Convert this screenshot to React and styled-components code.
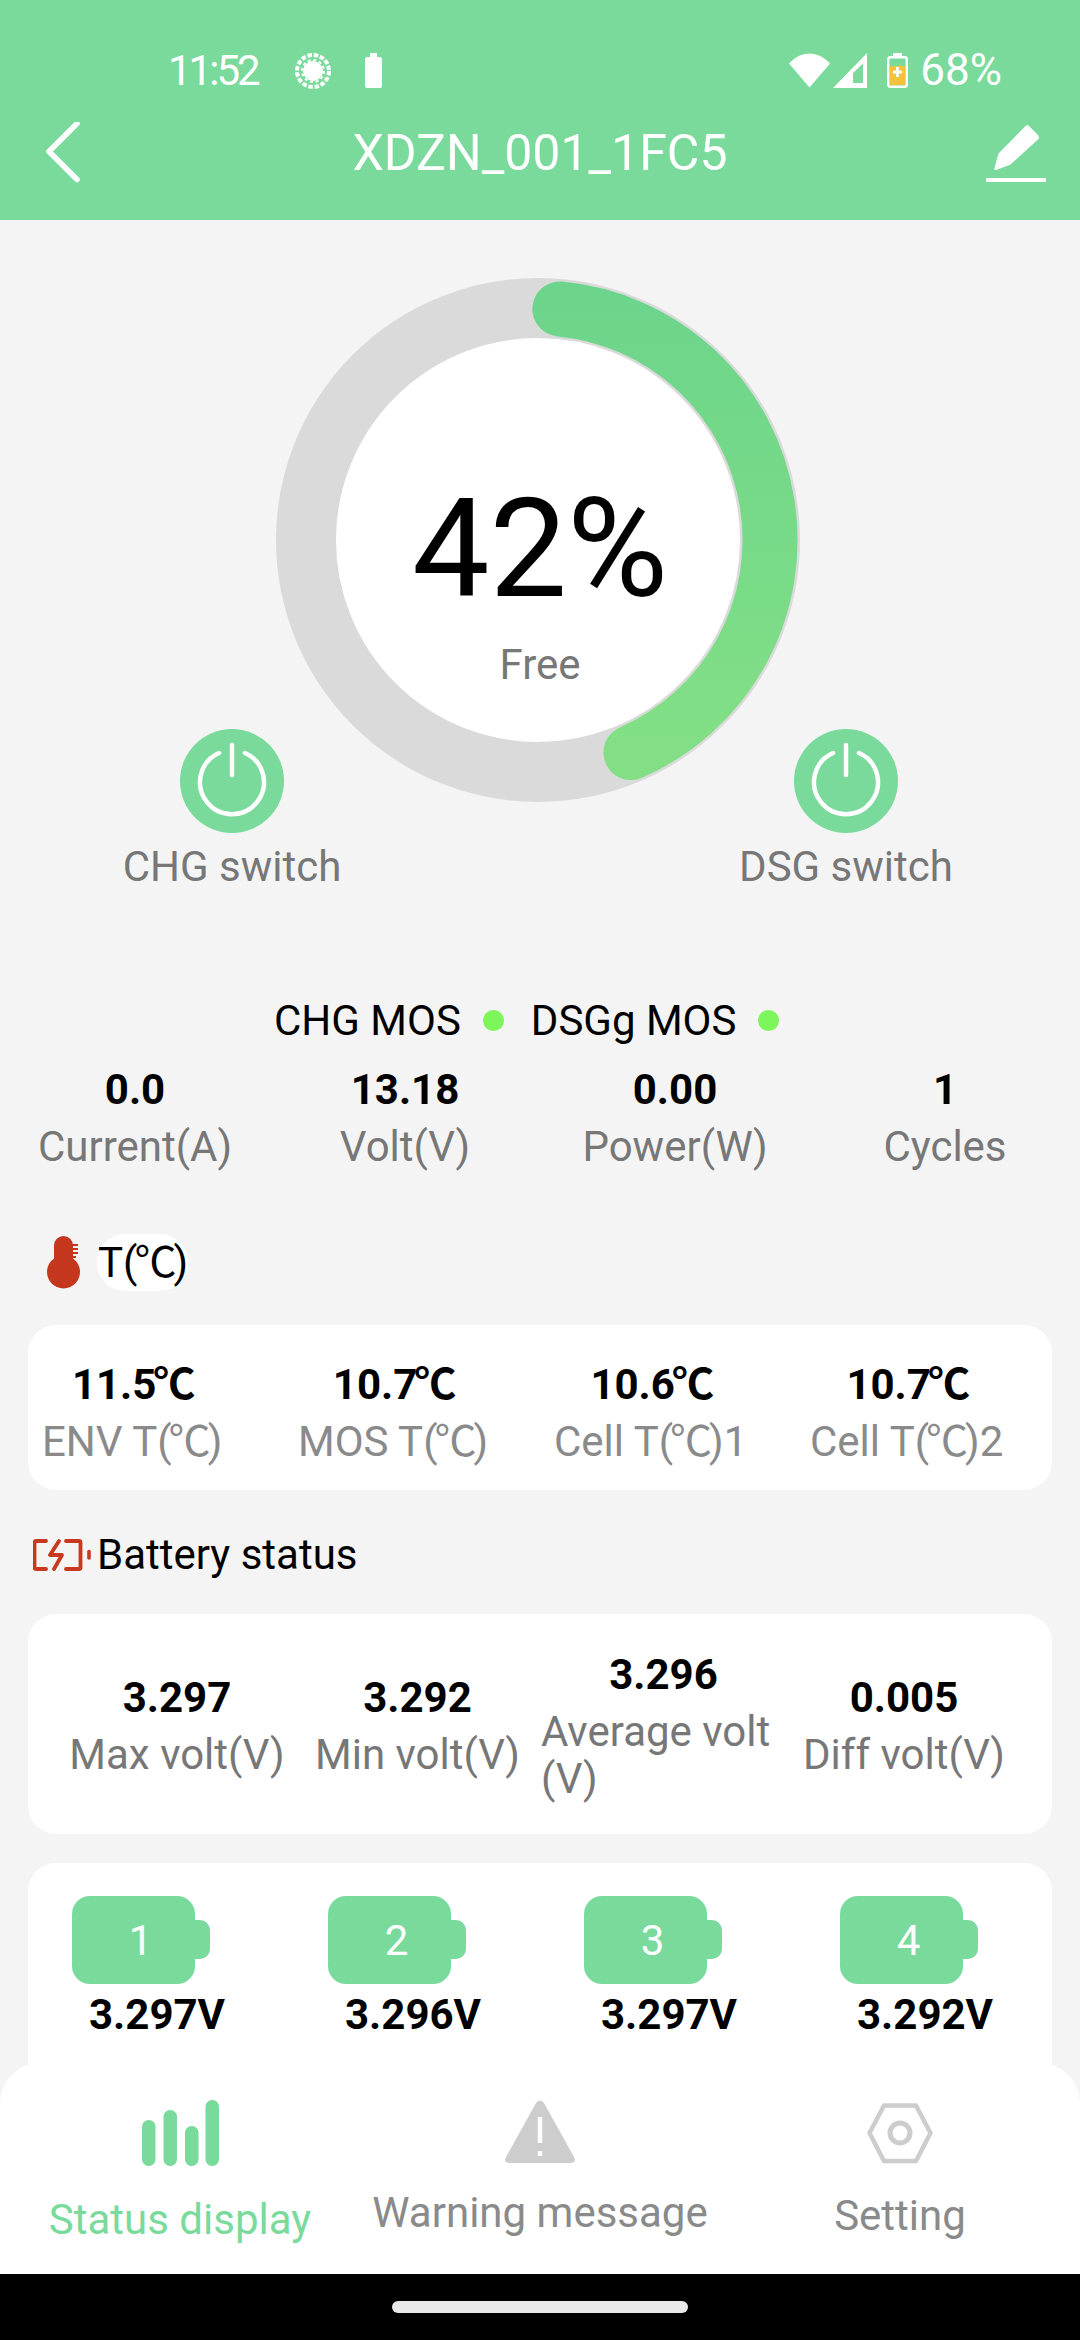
import React from "react";
import styled, { createGlobalStyle } from "styled-components";

const GREEN = "#79da9c";

const GlobalStyle = createGlobalStyle`
  html, body {
    margin: 0;
    padding: 0;
    background: #f4f4f4;
  }
  * {
    box-sizing: border-box;
  }
`;

const Page = styled.div`
  position: relative;
  width: 1080px;
  height: 2340px;
  overflow: hidden;
  background: #f4f4f4;
  font-family: Roboto, "Noto Sans CJK SC", sans-serif;
  font-size: 42px;
  line-height: 47px;
  color: #000;
`;

const Header = styled.header`
  height: 220px;
  background: ${GREEN};
  color: #fff;
  padding-top: 47px;
`;

const StatusBar = styled.div`
  display: flex;
  align-items: center;
  height: 47px;
  padding: 0 78px 0 168px;
`;

const Clock = styled.span`
  width: 126px;
  letter-spacing: -3px;
`;

const StatusIcons = styled.div`
  display: flex;
  align-items: center;
  gap: ${(p) => p.$gap}px;
  margin-left: ${(p) => (p.$right ? "auto" : "0")};
`;

const BatterySlot = styled.span`
  display: flex;
  margin-left: 17px;
`;

const Percent = styled.span`
  font-size: 44px;
  margin-left: 9px;
`;

const TitleBar = styled.div`
  display: grid;
  grid-template-columns: 1fr auto 1fr;
  align-items: center;
  height: 62px;
  margin-top: 28px;
  padding: 0 34px;

  & > svg:last-child {
    justify-self: end;
  }
`;

const Title = styled.h1`
  margin: 0;
  font-size: 50px;
  font-weight: 400;
`;

const RingBox = styled.div`
  position: relative;
  width: 524px;
  height: 524px;
  margin: 58px 0 0 276px;
  padding-left: 4px;
  display: flex;
  flex-direction: column;
  align-items: center;
`;

const RingArt = styled.svg`
  position: absolute;
  inset: 0;
`;

const BigValue = styled.div`
  position: relative;
  margin-top: 191px;
  font-size: 138px;
  line-height: 160px;
`;

const FreeLabel = styled.div`
  position: relative;
  margin-top: 12px;
  color: #777;
`;

const SwitchRow = styled.div`
  position: relative;
  display: flex;
  justify-content: space-between;
  margin-top: -73px;
  padding: 0 114px 0 112px;
`;

const SwitchItem = styled.div`
  width: 240px;
  display: flex;
  flex-direction: column;
  align-items: center;
  gap: 10px;
  color: #777;
`;

const MosRow = styled.div`
  display: flex;
  gap: 27px;
  margin-top: 107px;
  padding-left: 274px;
`;

const MosItem = styled.div`
  display: flex;
  align-items: center;
  gap: 22px;
`;

const Dot = styled.span`
  width: 21px;
  height: 21px;
  border-radius: 50%;
  background: #7cf65a;
`;

const StatsRow = styled.div`
  display: grid;
  grid-template-columns: repeat(4, 270px);
  margin-top: 22px;
`;

const Stat = styled.div`
  display: flex;
  flex-direction: column;
  align-items: center;
  text-align: ${(p) => (p.$start ? "left" : "center")};
`;

const Value = styled.b`
  display: block;
  font-weight: 700;
  align-self: center;
`;

const Label = styled.span`
  display: block;
  margin-top: 10px;
  white-space: ${(p) => (p.$wrap ? "normal" : "nowrap")};
  color: ${(p) => (p.$light ? "#8a8a8a" : "#777")};
`;

/* the degree sign sits tighter than the CJK font's full-width cell */
const Deg = styled.span`
  margin: 0 -3px;
`;

const SectionHead = styled.div`
  display: flex;
  align-items: center;
  margin: ${(p) => p.$top}px 0 0 ${(p) => p.$left}px;
  gap: ${(p) => p.$gap}px;
`;

const Pill = styled.span`
  display: flex;
  align-items: center;
  width: 91px;
  height: 57px;
  padding-left: 1px;
  border-radius: 28px;
  background: #fff;
  white-space: nowrap;
`;

const Card = styled.section`
  width: 1024px;
  margin: 0 0 0 28px;
  background: #fff;
  border-radius: 28px;
`;

const TempCard = styled(Card)`
  display: grid;
  grid-template-columns: repeat(4, 256px);
  justify-items: start;
  height: 165px;
  margin-top: 34px;
  padding: 36px 0 0 14px;
`;

const VoltCard = styled(Card)`
  display: grid;
  grid-template-columns: 234px 247px 245px 236px;
  align-items: center;
  height: 220px;
  margin-top: 36px;
  padding: 4px 0 0 32px;
`;

const CellCard = styled(Card)`
  display: grid;
  grid-template-columns: repeat(4, 256px);
  height: 300px;
  margin-top: 29px;
  padding: 33px 0 0 44px;
`;

const Cell = styled.div`
  display: flex;
  flex-direction: column;
  align-items: flex-start;
`;

const CellBattery = styled.div`
  position: relative;
  width: 123px;
  height: 88px;
  display: flex;
  align-items: center;
  justify-content: center;
  padding-left: 14px;
  border-radius: 18px;
  background: ${GREEN};
  color: #fff;

  &::after {
    content: "";
    position: absolute;
    top: 24px;
    right: -15px;
    width: 15px;
    height: 39px;
    border-radius: 0 10px 10px 0;
    background: ${GREEN};
  }
`;

const CellVolt = styled.b`
  margin: 7px 0 0 17px;
  font-weight: 700;
`;

const TabBar = styled.nav`
  position: absolute;
  left: 0;
  right: 0;
  bottom: 66px;
  height: 211px;
  display: grid;
  grid-template-columns: repeat(3, 360px);
  padding-top: 37px;
  background: #fff;
  border-radius: 40px 40px 0 0;
`;

const Tab = styled.div`
  display: flex;
  flex-direction: column;
  align-items: center;
  gap: ${(p) => p.$gap}px;
  color: ${(p) => (p.$active ? GREEN : "#8a8a8a")};
`;

const NavBar = styled.div`
  position: absolute;
  left: 0;
  right: 0;
  bottom: 0;
  height: 66px;
  display: flex;
  justify-content: center;
  padding-top: 27px;
  background: #000;
`;

const HomePill = styled.span`
  width: 296px;
  height: 12px;
  border-radius: 6px;
  background: #e9e9e9;
`;

const SunIcon = () => (
  <svg width="38" height="38" viewBox="0 0 38 38">
    <circle cx="19" cy="19" r="16" fill="none" stroke="#fff" strokeWidth="4" strokeDasharray="4.500 1.800" />
    <circle cx="19" cy="19" r="10" fill="#fff" />
    <circle cx="19" cy="19" r="11" fill="none" stroke="#fff" strokeWidth="2" strokeDasharray="3 2.760" />
  </svg>
);

const SmallBattery = () => (
  <svg width="17" height="35" viewBox="0 0 17 35">
    <path d="M5 0h7v4h3a2 2 0 0 1 2 2v27a2 2 0 0 1-2 2H2a2 2 0 0 1-2-2V6a2 2 0 0 1 2-2h3z" fill="#fff" />
  </svg>
);

const WifiIcon = () => (
  <svg width="41" height="35" viewBox="0 0 41 35">
    <path d="M20.500 34.500L0 10.500C12 -3 29 -3 41 10.500Z" fill="#fff" />
  </svg>
);

const SignalIcon = () => (
  <svg width="34" height="35" viewBox="0 0 34 35">
    <path fillRule="evenodd" d="M34 0V35H0ZM30 10.500L20 20V30H30Z" fill="#fff" />
  </svg>
);

const ChargeBattery = () => (
  <svg width="21" height="35" viewBox="0 0 21 35">
    <rect x="6" y="0" width="9" height="4" fill="#fff" />
    <rect x="1.200" y="4.200" width="18.600" height="29.600" rx="2" fill="none" stroke="#fff" strokeWidth="2.400" />
    <rect x="3" y="13" width="15" height="19" fill="#f4c23c" />
    <path d="M10.500 14v10M6 19h9" stroke="#fff" strokeWidth="3" />
  </svg>
);

const BackIcon = () => (
  <svg width="46" height="62" viewBox="0 0 46 62">
    <path d="M43 1.500L15 29.500L43 57.500" fill="none" stroke="#fff" strokeWidth="5.500" strokeLinecap="round" strokeLinejoin="round" />
  </svg>
);

const EditIcon = () => (
  <svg width="60" height="60" viewBox="0 0 60 60">
    <path d="M40 2.500Q41.500 1.500 43 3L52 12Q54 14.500 52 16.500L25 41Q24 42 22 42.500L10 47Q8 47.500 8.500 45L12 32Q12.500 30 14 29Z" fill="#fff" />
    <rect x="0" y="55" width="60" height="4" fill="#fff" />
  </svg>
);

const PowerIcon = () => (
  <svg width="104" height="104" viewBox="0 0 104 104">
    <circle cx="52" cy="52" r="52" fill={GREEN} />
    <path d="M39 24A32 32 0 1 0 65 24" fill="none" stroke="#fff" strokeWidth="4.500" strokeLinecap="round" />
    <path d="M52 16V46" fill="none" stroke="#fff" strokeWidth="4.500" strokeLinecap="round" />
  </svg>
);

const ThermoIcon = () => (
  <svg width="36" height="53" viewBox="0 0 36 53">
    <path d="M8 9.500a9.500 9.500 0 0 1 19 0v13a16.500 16.500 0 1 1-19 0z" fill="#c5361f" />
    <path d="M26 9h6M26 13h6M26 17h6M26 21h4" stroke="#c5361f" strokeWidth="2" />
  </svg>
);

const ChargeIcon = () => (
  <svg width="58" height="32" viewBox="0 0 58 32">
    <g fill="none" stroke="#c9391f" strokeWidth="3.800" strokeLinecap="round" strokeLinejoin="round">
      <path d="M13 2H3a1.500 1.500 0 0 0-1.500 1.500v25A1.500 1.500 0 0 0 3 30H13" />
      <path d="M33 2H46a1.500 1.500 0 0 1 1.500 1.500v25A1.500 1.500 0 0 1 46 30H33" />
      <path d="M26 2L17 16H29L21 30" />
      <path d="M56 12.500V19" strokeWidth="3.600" />
    </g>
  </svg>
);

const BarsIcon = () => (
  <svg width="77" height="66" viewBox="0 0 77 66">
    <g fill={GREEN}>
      <rect x="0" y="20" width="13.500" height="46" rx="6.500" />
      <rect x="21.500" y="10" width="13.500" height="56" rx="6.500" />
      <rect x="43" y="26" width="13.500" height="40" rx="6.500" />
      <rect x="63.500" y="0" width="13.500" height="66" rx="6.500" />
    </g>
  </svg>
);

const WarnIcon = () => (
  <svg width="70" height="66" viewBox="0 0 70 66">
    <path d="M31 3Q35 -2 39 3L69 57Q72 63 65 63H5Q-2 63 1 57Z" fill="#cdcdcd" />
    <path d="M35 17V43" stroke="#fff" strokeWidth="4.500" />
    <path d="M35 51V56" stroke="#fff" strokeWidth="4.500" />
  </svg>
);

const HexIcon = () => (
  <svg width="66" height="66" viewBox="0 0 66 66">
    <path d="M17 5.500H49L63.500 33L49 61H17L2.500 33Z" fill="none" stroke="#cdcdcd" strokeWidth="4.500" strokeLinejoin="round" />
    <circle cx="33" cy="33" r="10" fill="none" stroke="#cdcdcd" strokeWidth="5" />
  </svg>
);

const stats = [
  ["0.0", "Current(A)"],
  ["13.18", "Volt(V)"],
  ["0.00", "Power(W)"],
  ["1", "Cycles"],
];

const temps = [
  ["11.5", "ENV T(", ")"],
  ["10.7", "MOS T(", ")"],
  ["10.6", "Cell T(", ")1"],
  ["10.7", "Cell T(", ")2"],
];

const cells = ["3.297V", "3.296V", "3.297V", "3.292V"];

export default function App() {
  return (
    <Page>
      <GlobalStyle />
      <Header>
        <StatusBar>
          <Clock>11:52</Clock>
          <StatusIcons $gap={33}>
            <SunIcon />
            <SmallBattery />
          </StatusIcons>
          <StatusIcons $right $gap={3}>
            <WifiIcon />
            <SignalIcon />
            <BatterySlot>
              <ChargeBattery />
            </BatterySlot>
            <Percent>68%</Percent>
          </StatusIcons>
        </StatusBar>
        <TitleBar>
          <BackIcon />
          <Title>XDZN_001_1FC5</Title>
          <EditIcon />
        </TitleBar>
      </Header>

      <RingBox>
        <RingArt width="524" height="524" viewBox="0 0 524 524">
          <defs>
            <linearGradient id="arc" gradientUnits="userSpaceOnUse" x1="0" y1="30" x2="0" y2="475">
              <stop offset="0" stopColor="#6dd58b" />
              <stop offset="1" stopColor="#82df85" />
            </linearGradient>
          </defs>
          <circle cx="262" cy="262" r="232" fill="#fff" stroke="#dadada" strokeWidth="60" />
          <path
            d="M283.800 31A232 232 0 0 1 354.900 474.600"
            fill="none"
            stroke="url(#arc)"
            strokeWidth="55"
            strokeLinecap="round"
          />
        </RingArt>
        <BigValue>42%</BigValue>
        <FreeLabel>Free</FreeLabel>
      </RingBox>

      <SwitchRow>
        <SwitchItem>
          <PowerIcon />
          CHG switch
        </SwitchItem>
        <SwitchItem>
          <PowerIcon />
          DSG switch
        </SwitchItem>
      </SwitchRow>

      <MosRow>
        <MosItem>
          CHG MOS <Dot />
        </MosItem>
        <MosItem>
          DSGg MOS <Dot />
        </MosItem>
      </MosRow>

      <StatsRow>
        {stats.map(([v, l]) => (
          <Stat key={l}>
            <Value>{v}</Value>
            <Label>{l}</Label>
          </Stat>
        ))}
      </StatsRow>

      <SectionHead $top={64} $left={46} $gap={15}>
        <ThermoIcon />
        <Pill>
          T(<Deg>℃</Deg>)
        </Pill>
      </SectionHead>

      <TempCard>
        {temps.map(([v, a, b], i) => (
          <Stat key={i}>
            <Value>
              {v}
              <Deg>℃</Deg>
            </Value>
            <Label $light>
              {a}
              <Deg>℃</Deg>
              {b}
            </Label>
          </Stat>
        ))}
      </TempCard>

      <SectionHead $top={41} $left={33} $gap={6}>
        <ChargeIcon />
        Battery status
      </SectionHead>

      <VoltCard>
        <Stat>
          <Value>3.297</Value>
          <Label>Max volt(V)</Label>
        </Stat>
        <Stat>
          <Value>3.292</Value>
          <Label>Min volt(V)</Label>
        </Stat>
        <Stat $start>
          <Value>3.296</Value>
          <Label $wrap>Average volt (V)</Label>
        </Stat>
        <Stat>
          <Value>0.005</Value>
          <Label>Diff volt(V)</Label>
        </Stat>
      </VoltCard>

      <CellCard>
        {cells.map((v, i) => (
          <Cell key={i}>
            <CellBattery>{i + 1}</CellBattery>
            <CellVolt>{v}</CellVolt>
          </Cell>
        ))}
      </CellCard>

      <TabBar>
        <Tab $active $gap={30}>
          <BarsIcon />
          Status display
        </Tab>
        <Tab $gap={23}>
          <WarnIcon />
          Warning message
        </Tab>
        <Tab $gap={26}>
          <HexIcon />
          Setting
        </Tab>
      </TabBar>
      <NavBar>
        <HomePill />
      </NavBar>
    </Page>
  );
}
